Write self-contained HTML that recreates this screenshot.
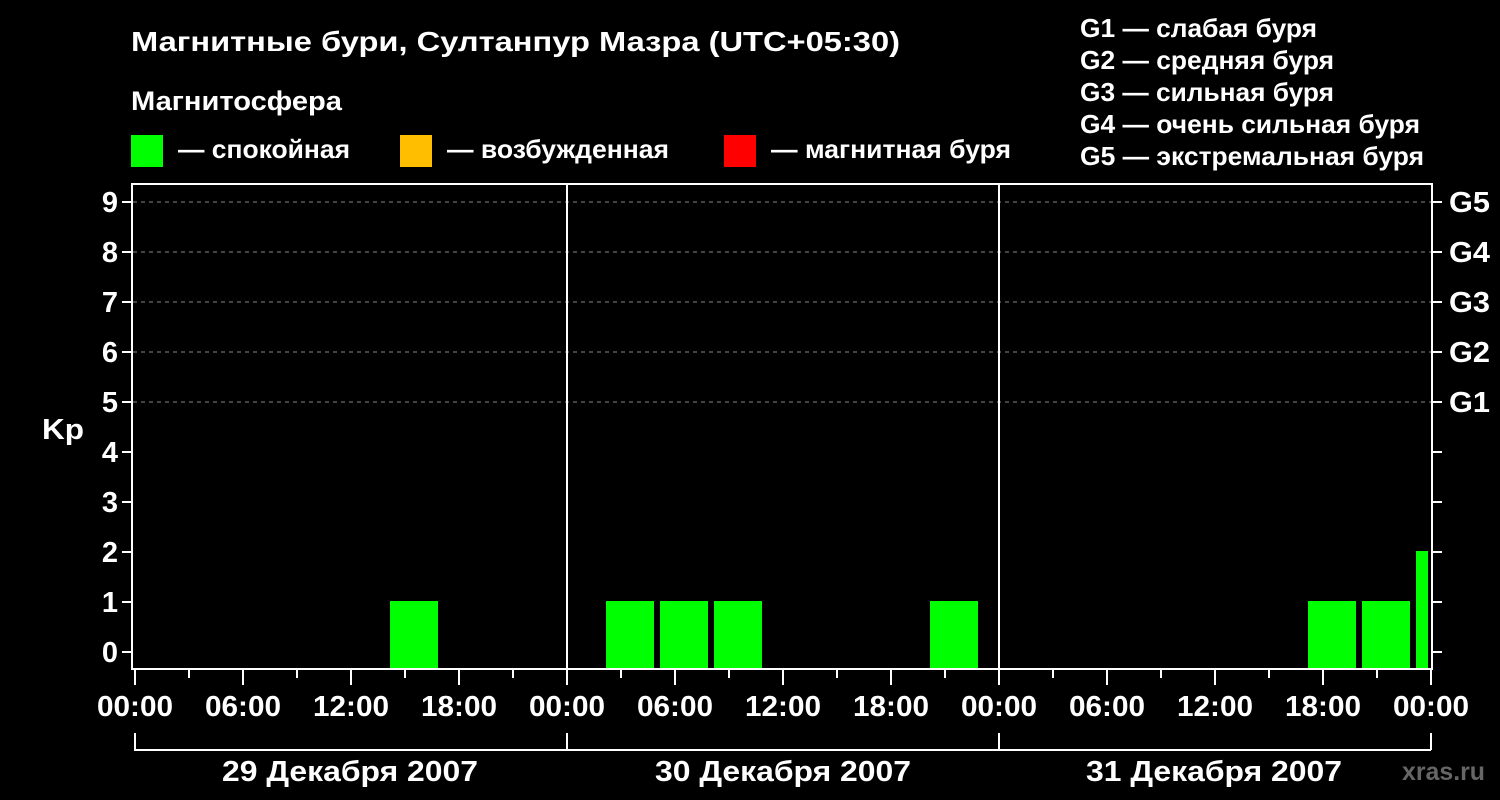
<!DOCTYPE html>
<html><head><meta charset="utf-8"><style>
html,body{margin:0;padding:0;background:#000;width:1500px;height:800px;overflow:hidden}
svg{display:block}
text{font-family:"Liberation Sans",Arial,sans-serif;font-weight:bold;fill:#fff}
</style></head><body>
<svg width="1500" height="800" viewBox="0 0 1500 800" xmlns="http://www.w3.org/2000/svg">
<rect width="1500" height="800" fill="#000"/>
<text x="131" y="51" font-size="28" textLength="769" lengthAdjust="spacingAndGlyphs">Магнитные бури, Султанпур Мазра (UTC+05:30)</text>
<text x="131" y="110" font-size="27" textLength="211" lengthAdjust="spacingAndGlyphs">Магнитосфера</text>
<rect x="131" y="135" width="32" height="32" fill="#00ff00"/>
<text x="178" y="158" font-size="26" textLength="172" lengthAdjust="spacingAndGlyphs">— спокойная</text>
<rect x="400" y="135" width="32" height="32" fill="#ffbf00"/>
<text x="447" y="158" font-size="26" textLength="222" lengthAdjust="spacingAndGlyphs">— возбужденная</text>
<rect x="724" y="135" width="32" height="32" fill="#ff0000"/>
<text x="771" y="158" font-size="26" textLength="240" lengthAdjust="spacingAndGlyphs">— магнитная буря</text>
<g font-size="26">
<text x="1080" y="37" textLength="237" lengthAdjust="spacingAndGlyphs">G1 — слабая буря</text>
<text x="1080" y="69" textLength="254" lengthAdjust="spacingAndGlyphs">G2 — средняя буря</text>
<text x="1080" y="101" textLength="254" lengthAdjust="spacingAndGlyphs">G3 — сильная буря</text>
<text x="1080" y="133" textLength="340" lengthAdjust="spacingAndGlyphs">G4 — очень сильная буря</text>
<text x="1080" y="165" textLength="344" lengthAdjust="spacingAndGlyphs">G5 — экстремальная буря</text>
</g>
<g stroke="#888" stroke-width="1" stroke-dasharray="4,4">
<line x1="133" y1="202" x2="1431" y2="202"/>
<line x1="133" y1="252" x2="1431" y2="252"/>
<line x1="133" y1="302" x2="1431" y2="302"/>
<line x1="133" y1="352" x2="1431" y2="352"/>
<line x1="133" y1="402" x2="1431" y2="402"/>
</g>
<g fill="#00ff00">
<rect x="390" y="601" width="48" height="67"/>
<rect x="606" y="601" width="48" height="67"/>
<rect x="660" y="601" width="48" height="67"/>
<rect x="714" y="601" width="48" height="67"/>
<rect x="930" y="601" width="48" height="67"/>
<rect x="1308" y="601" width="48" height="67"/>
<rect x="1362" y="601" width="48" height="67"/>
<rect x="1416" y="551" width="12" height="117"/>
</g>
<g stroke="#fff" stroke-width="2" fill="none">
<rect x="132" y="184" width="1300" height="485"/>
<line x1="567" y1="184" x2="567" y2="669"/>
<line x1="999" y1="184" x2="999" y2="669"/>
<path d="M122 202H132M122 252H132M122 302H132M122 352H132M122 402H132M122 452H132M122 502H132M122 552H132M122 602H132M122 652H132"/>
<path d="M1432 202H1442M1432 252H1442M1432 302H1442M1432 352H1442M1432 402H1442M1432 452H1442M1432 502H1442M1432 552H1442M1432 602H1442M1432 652H1442"/>
<path d="M135 669V685M189 669V678M243 669V685M297 669V678M351 669V685M405 669V678M459 669V685M513 669V678M567 669V685M621 669V678M675 669V685M729 669V678M783 669V685M837 669V678M891 669V685M945 669V678M999 669V685M1053 669V678M1107 669V685M1161 669V678M1215 669V685M1269 669V678M1323 669V685M1377 669V678M1431 669V685"/>
<path d="M135 733V750H1431M567 733V750M999 733V750M1431 733V750"/>
</g>
<g font-size="29" text-anchor="end">
<text x="118" y="212">9</text><text x="118" y="262">8</text><text x="118" y="312">7</text>
<text x="118" y="362">6</text><text x="118" y="412">5</text><text x="118" y="462">4</text>
<text x="118" y="512">3</text><text x="118" y="562">2</text><text x="118" y="612">1</text>
<text x="118" y="662">0</text>
</g>
<text x="42" y="439" font-size="29" textLength="42" lengthAdjust="spacingAndGlyphs">Kp</text>
<g font-size="29">
<text x="1449" y="212" textLength="41" lengthAdjust="spacingAndGlyphs">G5</text><text x="1449" y="262" textLength="41" lengthAdjust="spacingAndGlyphs">G4</text><text x="1449" y="312" textLength="41" lengthAdjust="spacingAndGlyphs">G3</text>
<text x="1449" y="362" textLength="41" lengthAdjust="spacingAndGlyphs">G2</text><text x="1449" y="412" textLength="41" lengthAdjust="spacingAndGlyphs">G1</text>
</g>
<g font-size="29" text-anchor="middle">
<text x="135" y="716" textLength="76" lengthAdjust="spacingAndGlyphs">00:00</text><text x="243" y="716" textLength="76" lengthAdjust="spacingAndGlyphs">06:00</text><text x="351" y="716" textLength="76" lengthAdjust="spacingAndGlyphs">12:00</text><text x="459" y="716" textLength="76" lengthAdjust="spacingAndGlyphs">18:00</text>
<text x="567" y="716" textLength="76" lengthAdjust="spacingAndGlyphs">00:00</text><text x="675" y="716" textLength="76" lengthAdjust="spacingAndGlyphs">06:00</text><text x="783" y="716" textLength="76" lengthAdjust="spacingAndGlyphs">12:00</text><text x="891" y="716" textLength="76" lengthAdjust="spacingAndGlyphs">18:00</text>
<text x="999" y="716" textLength="76" lengthAdjust="spacingAndGlyphs">00:00</text><text x="1107" y="716" textLength="76" lengthAdjust="spacingAndGlyphs">06:00</text><text x="1215" y="716" textLength="76" lengthAdjust="spacingAndGlyphs">12:00</text><text x="1323" y="716" textLength="76" lengthAdjust="spacingAndGlyphs">18:00</text>
<text x="1431" y="716" textLength="76" lengthAdjust="spacingAndGlyphs">00:00</text>
<text x="350" y="781" textLength="256" lengthAdjust="spacingAndGlyphs">29 Декабря 2007</text>
<text x="783" y="781" textLength="256" lengthAdjust="spacingAndGlyphs">30 Декабря 2007</text>
<text x="1214" y="781" textLength="256" lengthAdjust="spacingAndGlyphs">31 Декабря 2007</text>
</g>
<text x="1402" y="780" font-size="25" textLength="83" lengthAdjust="spacingAndGlyphs" style="fill:#666">xras.ru</text>
</svg>
</body></html>
